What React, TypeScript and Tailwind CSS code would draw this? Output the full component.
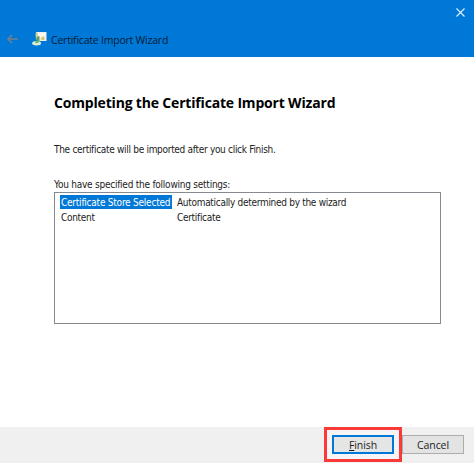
interface Setting {
  name: string;
  value: string;
  selected?: boolean;
}

const settings: Setting[] = [
  { name: 'Certificate Store Selected', value: 'Automatically determined by the wizard', selected: true },
  { name: 'Content', value: 'Certificate' },
];

function CertificateIcon() {
  return (
    <svg width="15" height="14" viewBox="0 0 15 14" aria-hidden="true">
      <path d="M4 0h10.500v9H6z" fill="#eceeea" />
      <path d="M6 1h7.500v4H6z" fill="#fbfaf0" />
      <path d="M9.500 6l2-2 1 3.500-3 .5z" fill="#e2b64f" />
      <path d="M3.500 1.500l2.500-.5L6 6l-2 2z" fill="#d5d68a" />
      <path d="M4.500 5l3-1v5l-3 1.500z" fill="#5f9d69" />
      <ellipse cx="4.600" cy="11.200" rx="4.400" ry="2.200" fill="#dcebd9" />
      <path d="M2.500 10l3-1.500 2 1.500-3 1.200z" fill="#65b957" />
    </svg>
  );
}

function TitleBar() {
  return (
    <header className="h-[57px] bg-[#0078d7] flex justify-between">
      <div className="flex items-center pl-[7px] pt-[22px] h-[56px]">
        <svg width="12" height="10" viewBox="0 0 12 10" fill="none" stroke="#6f8090" strokeWidth="1.6" aria-hidden="true">
          <path d="M11 5H1M5 1L1 5l4 4" />
        </svg>
        <span className="ml-[13px]">
          <CertificateIcon />
        </span>
        <h1 className="ml-1 pt-px font-['Open_Sans',sans-serif] text-[10.5px] leading-4 tracking-[-0.22px] whitespace-nowrap text-[#031a33]">
          Certificate Import Wizard
        </h1>
      </div>
      <button aria-label="Close" className="mt-2 mr-[9px] h-[9px] w-[9px]">
        <svg width="9" height="9" viewBox="0 0 9 9" fill="none" stroke="#e3f2ff" strokeWidth="1.1">
          <path d="M.5.5l8 8M8.5.5l-8 8" />
        </svg>
      </button>
    </header>
  );
}

function SettingsList() {
  return (
    <div className="h-[132px] w-[387px] border border-[#858a91] pl-[5px] pt-[2px]">
      {settings.map((setting) => (
        <div key={setting.name} className="flex h-[15px]">
          <div className="w-[117px]">
            <span
              className={
                setting.selected
                  ? 'block h-[14px] w-[112px] bg-[#0078d7] pl-px leading-[15px] tracking-[-0.23px] text-white'
                  : 'block h-[14px] pl-px leading-[15px]'
              }
            >
              {setting.name}
            </span>
          </div>
          <span className="leading-4">{setting.value}</span>
        </div>
      ))}
    </div>
  );
}

export default function App() {
  return (
    <div className="h-[463px] w-[474px] overflow-hidden bg-white flex flex-col whitespace-nowrap font-['DejaVu_Sans_Condensed','DejaVu_Sans',sans-serif] text-[10px] tracking-[-0.3px] text-[#1c1c1c]">
      <TitleBar />
      <main className="flex-1 pl-[54px]">
        <h2 className="mt-9 h-5 font-['Open_Sans',sans-serif] text-[14px] font-bold leading-5 tracking-[-0.18px] text-black">
          Completing the Certificate Import Wizard
        </h2>
        <p className="mt-[30px] h-[14px] leading-[14px]">The certificate will be imported after you click Finish.</p>
        <p className="mt-[21px] h-[14px] leading-[14px] tracking-[-0.24px]">You have specified the following settings:</p>
        <SettingsList />
      </main>
      <footer className="h-9 bg-[#f0f0f0] flex items-start font-['Open_Sans',sans-serif] text-[10.5px] tracking-[-0.1px]">
        <div className="ml-[324px] h-[35px] w-[78px] border-[3px] border-[#fa3a38] bg-[#f6f4f6] pl-[5px] pt-[5px]">
          <button className="block h-[19px] w-[62px] border-2 border-[#0078d7] bg-[#e5e5e5] leading-[14px]">
            <span className="underline underline-offset-1">F</span>inish
          </button>
        </div>
        <button className="mt-2 h-[19px] w-[62px] border border-[#adadad] bg-[#e3e3e3] leading-4">Cancel</button>
      </footer>
    </div>
  );
}
